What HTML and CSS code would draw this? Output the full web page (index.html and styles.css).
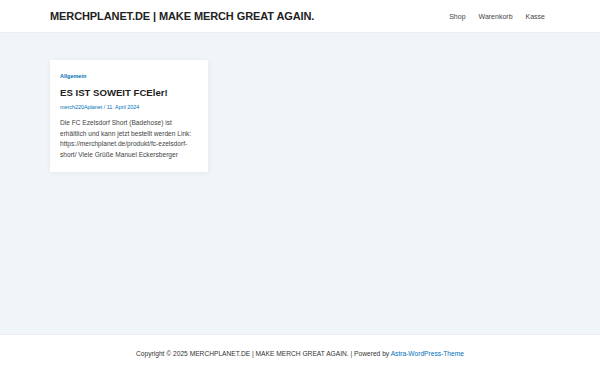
FILE: index.html
```html
<!DOCTYPE html>
<html lang="de">
<head>
    <meta charset="UTF-8">
    <meta name="viewport" content="width=device-width, initial-scale=1.0">
    <title>MERCHPLANET.DE | MAKE MERCH GREAT AGAIN.</title>
    <link rel="stylesheet" href="styles.css">
</head>
<body>
    <header class="site-header">
        <div class="header-inner">
            <a class="site-title" href="#">MERCHPLANET.DE | MAKE MERCH GREAT AGAIN.</a>
            <nav class="main-nav">
                <a href="#">Shop</a>
                <a href="#">Warenkorb</a>
                <a href="#">Kasse</a>
            </nav>
        </div>
    </header>

    <main class="site-content">
        <article class="post-card">
            <a class="post-cat" href="#">Allgemein</a>
            <h2 class="post-title">ES IST SOWEIT FCEler!</h2>
            <div class="post-meta"><a href="#">merch220Aplanet</a> / <span>11. April 2024</span></div>
            <p class="post-excerpt">Die FC Ezelsdorf Short (Badehose) ist erhältlich und kann jetzt bestellt werden Link: https://merchplanet.de/produkt/fc-ezelsdorf-short/ Viele Grüße Manuel Eckersberger</p>
        </article>
    </main>

    <footer class="site-footer">
        <p>Copyright © 2025 MERCHPLANET.DE | MAKE MERCH GREAT AGAIN. | Powered by <a href="#">Astra-WordPress-Theme</a></p>
    </footer>
</body>
</html>
```

FILE: styles.css
```css
* {
    box-sizing: border-box;
    margin: 0;
    padding: 0;
    font-family: 'Liberation Sans', Arial, sans-serif;
}

html, body {
    height: 100%;
}

body {
    display: flex;
    flex-direction: column;
    background-color: #f0f5fa;
    color: #3a3a3a;
}

a {
    text-decoration: none;
}

.site-header {
    background-color: #fff;
    height: 33px;
    border-bottom: 1px solid #eaeef3;
}

.header-inner {
    height: 100%;
    padding: 0 50px;
    display: flex;
    align-items: center;
    justify-content: space-between;
}

.site-title {
    font-size: 11px;
    font-weight: bold;
    color: #222;
    letter-spacing: -0.1px;
}

.main-nav {
    display: flex;
    gap: 13px;
    padding-right: 5px;
}

.main-nav a {
    font-size: 7px;
    color: #444;
}

.site-content {
    flex: 1;
    padding: 27px 50px;
}

.post-card {
    width: 158px;
    background-color: #fff;
    padding: 13px 13px 12px 10px;
    box-shadow: 0 1px 6px rgba(0, 0, 0, 0.06);
}

.post-cat {
    display: block;
    font-size: 5.5px;
    font-weight: bold;
    color: #0170b9;
    margin-bottom: 8px;
}

.post-title {
    font-size: 9.6px;
    font-weight: bold;
    color: #222;
    margin-bottom: 6px;
}

.post-meta {
    font-size: 5.4px;
    color: #0170b9;
    margin-bottom: 8px;
}

.post-meta a {
    color: #0170b9;
}

.post-excerpt {
    font-size: 6.6px;
    line-height: 10.6px;
    color: #444;
}

.site-footer {
    background-color: #fff;
    height: 41px;
    padding-bottom: 3px;
    display: flex;
    align-items: center;
    justify-content: center;
    border-top: 1px solid #eaeef3;
}

.site-footer p {
    font-size: 6.65px;
    color: #333;
}

.site-footer a {
    color: #0170b9;
}
```
